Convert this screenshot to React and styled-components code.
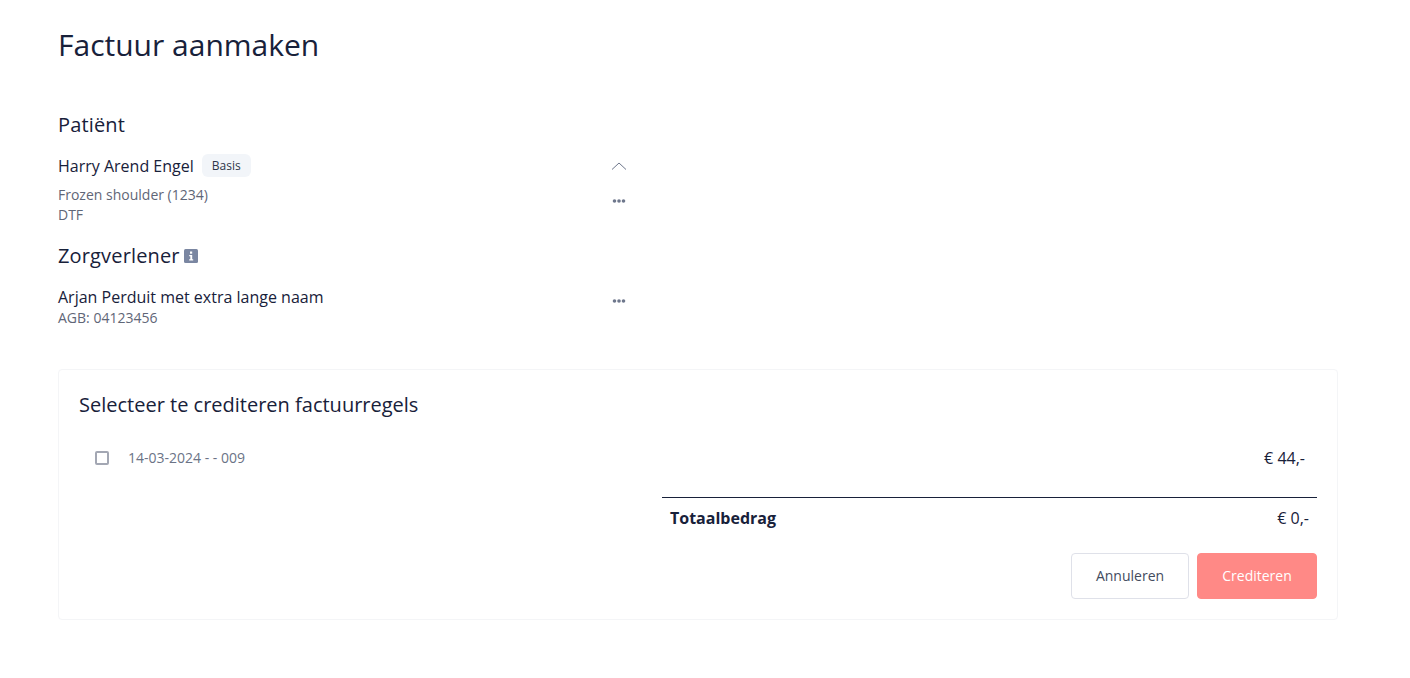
import React from 'react';
import styled, { createGlobalStyle } from 'styled-components';

const GlobalStyle = createGlobalStyle`
  html, body {
    margin: 0;
    padding: 0;
    background: #fff;
    font-family: 'Open Sans', 'Noto Sans', sans-serif;
    color: #18213a;
    -webkit-font-smoothing: antialiased;
  }
`;

const Page = styled.div`
  box-sizing: border-box;
  width: 1410px;
  height: 678px;
  padding: 23px 72px 0 58px;
  overflow: hidden;
`;

const Title = styled.h1`
  margin: 0;
  font-size: 30px;
  line-height: 44px;
  font-weight: 400;
`;

const SectionTitle = styled.h2`
  display: flex;
  align-items: center;
  gap: 4px;
  margin: 0;
  font-size: 20px;
  line-height: 28px;
  font-weight: 500;
  letter-spacing: 0.15px;
`;

const Section = styled.section`
  width: 569px;
  margin-top: ${({ $gap }) => $gap}px;
`;

const Row = styled.div`
  display: flex;
  align-items: ${({ $top }) => ($top ? 'flex-start' : 'center')};
  justify-content: space-between;
  margin-top: ${({ $gap }) => $gap}px;
`;

const NameGroup = styled.div`
  display: flex;
  align-items: center;
  gap: 8px;
`;

const Name = styled.div`
  font-size: 16px;
  line-height: 24px;
`;

const Muted = styled.div`
  margin-top: ${({ $pull }) => ($pull ? '-1px' : 0)};
  font-size: 14px;
  line-height: 20px;
  color: #5f6677;
`;

const Badge = styled.span`
  display: inline-flex;
  align-items: center;
  height: 23px;
  margin-top: -2px;
  padding: 0 10px;
  border-radius: 6px;
  background: #f2f5f9;
  font-size: 12px;
  color: #2e364a;
`;

const IconButton = styled.span`
  display: flex;
  width: 16px;
  height: 16px;
  margin-top: ${({ $offset }) => $offset || 0}px;
  color: #6e778c;
`;

const Card = styled.section`
  box-sizing: border-box;
  width: 1280px;
  height: 251px;
  margin-top: 41px;
  padding: 21px 20px 20px;
  border: 1px solid #f4f5f7;
  border-radius: 4px;
`;

const CardTitle = styled.h3`
  margin: 0;
  font-size: 20px;
  line-height: 28px;
  font-weight: 400;
`;

const InvoiceLine = styled.div`
  display: flex;
  align-items: center;
  justify-content: space-between;
  height: 24px;
  margin-top: 27px;
  padding: 0 12px 0 16px;
`;

const LineLabel = styled.label`
  display: flex;
  align-items: center;
  gap: 19px;
  font-size: 14px;
  line-height: 18px;
  color: #6b7386;
`;

const Checkbox = styled.span`
  box-sizing: border-box;
  width: 14px;
  height: 14px;
  border: 2px solid #a3a7b3;
  border-radius: 2px;
`;

const Amount = styled.span`
  font-size: 16px;
  line-height: 24px;
`;

const Totals = styled.div`
  display: flex;
  justify-content: space-between;
  align-items: center;
  box-sizing: border-box;
  width: 655px;
  height: 42px;
  margin: 27px 0 0 auto;
  padding: 0 8px 2px;
  border-top: 1px solid #18213a;
`;

const TotalLabel = styled.span`
  font-size: 16px;
  font-weight: 700;
`;

const Actions = styled.div`
  display: flex;
  justify-content: flex-end;
  gap: 8px;
  margin-top: 14px;
`;

const Button = styled.button`
  box-sizing: border-box;
  width: ${({ $primary }) => ($primary ? '120px' : '118px')};
  height: 46px;
  padding: 0 0 2px;
  border: 1px solid ${({ $primary }) => ($primary ? '#ff8986' : '#dfe1e9')};
  border-radius: 4px;
  background: ${({ $primary }) => ($primary ? '#ff8986' : '#fff')};
  color: ${({ $primary }) => ($primary ? '#fff' : '#434b5e')};
  font-family: inherit;
  font-size: 14px;
  font-weight: 500;
`;

const ChevronUp = () => (
  <svg viewBox="0 0 16 16" width="16" height="16" fill="none" stroke="currentColor" strokeWidth="1">
    <path d="M1 11.500 8 5l7 6.500" />
  </svg>
);

const Dots = () => (
  <svg viewBox="0 0 16 16" width="16" height="16" fill="currentColor">
    <circle cx="3.500" cy="8" r="1.800" />
    <circle cx="8" cy="8" r="1.800" />
    <circle cx="12.500" cy="8" r="1.800" />
  </svg>
);

const InfoIcon = () => (
  <svg viewBox="0 0 14 14" width="14" height="14">
    <rect width="14" height="14" rx="1.500" fill="#7a86a1" />
    <rect x="6" y="2.500" width="2.200" height="2.200" fill="#fff" />
    <path d="M5.200 6h3v4.200h1v1.300H5.200v-1.300h1.100V7.300H5.200z" fill="#fff" />
  </svg>
);

const App = () => (
  <Page>
    <GlobalStyle />
    <Title>Factuur aanmaken</Title>

    <Section $gap={44}>
      <SectionTitle>Patiënt</SectionTitle>
      <Row $gap={15}>
        <NameGroup>
          <Name>Harry Arend Engel</Name>
          <Badge>Basis</Badge>
        </NameGroup>
        <IconButton>
          <ChevronUp />
        </IconButton>
      </Row>
      <Row $top $gap={7}>
        <div>
          <Muted>Frozen shoulder (1234)</Muted>
          <Muted>DTF</Muted>
        </div>
        <IconButton $offset={8}>
          <Dots />
        </IconButton>
      </Row>
    </Section>

    <Section $gap={17}>
      <SectionTitle>
        Zorgverlener
        <InfoIcon />
      </SectionTitle>
      <Row $top $gap={15}>
        <div>
          <Name>Arjan Perduit met extra lange naam</Name>
          <Muted $pull>AGB: 04123456</Muted>
        </div>
        <IconButton $offset={8}>
          <Dots />
        </IconButton>
      </Row>
    </Section>

    <Card>
      <CardTitle>Selecteer te crediteren factuurregels</CardTitle>
      <InvoiceLine>
        <LineLabel>
          <Checkbox />
          14-03-2024 - - 009
        </LineLabel>
        <Amount>€ 44,-</Amount>
      </InvoiceLine>
      <Totals>
        <TotalLabel>Totaalbedrag</TotalLabel>
        <Amount>€ 0,-</Amount>
      </Totals>
      <Actions>
        <Button>Annuleren</Button>
        <Button $primary>Crediteren</Button>
      </Actions>
    </Card>
  </Page>
);

export default App;
